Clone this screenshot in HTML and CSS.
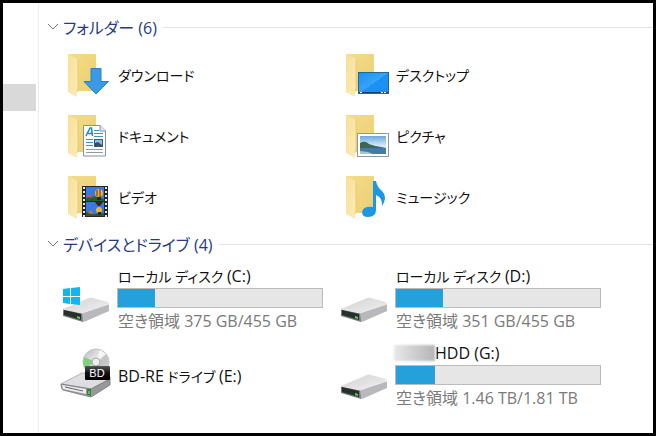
FILE: index.html
```html
<!DOCTYPE html>
<html lang="ja">
  <head>
    <meta charset="UTF-8" />
    <meta name="viewport" content="width=device-width, initial-scale=1.0" />
    <title>PC</title>
    <link rel="stylesheet" href="styles.css">
  </head>
  <body>
    <!-- shared icon shapes -->
    <svg class="defs" width="0" height="0" aria-hidden="true">
      <defs>
        <linearGradient id="back" x1="0" y1="0" x2="1" y2="1">
          <stop offset="0" stop-color="#f3dc8c" />
          <stop offset="1" stop-color="#ebcf70" />
        </linearGradient>
        <linearGradient id="flap" x1="0" y1="0" x2="1" y2="1">
          <stop offset="0" stop-color="#f8df96" />
          <stop offset="1" stop-color="#fdecb8" />
        </linearGradient>
        <linearGradient id="screen" x1="0" y1="0" x2="1" y2="1">
          <stop offset="0" stop-color="#1c8ff0" />
          <stop offset="0.5" stop-color="#38a4fa" />
          <stop offset="0.5" stop-color="#1d93f4" />
          <stop offset="1" stop-color="#1a8ef0" />
        </linearGradient>
        <linearGradient id="sky" x1="0" y1="0" x2="0" y2="1">
          <stop offset="0" stop-color="#6ea6e0" />
          <stop offset="0.55" stop-color="#d8ecf8" />
          <stop offset="1" stop-color="#d8ecf8" />
        </linearGradient>
        <linearGradient id="top" x1="0" y1="0" x2="1" y2="1">
          <stop offset="0" stop-color="#d2d2d4" />
          <stop offset="1" stop-color="#f0f0f1" />
        </linearGradient>
        <linearGradient id="disc" x1="0" y1="0" x2="1" y2="1">
          <stop offset="0" stop-color="#b5b5b5" />
          <stop offset="0.4" stop-color="#e4e4e4" />
          <stop offset="0.6" stop-color="#c2c2c2" />
          <stop offset="1" stop-color="#dcdcdc" />
        </linearGradient>
        <linearGradient id="tag" x1="0" y1="0" x2="0" y2="1">
          <stop offset="0" stop-color="#555" />
          <stop offset="0.5" stop-color="#111" />
          <stop offset="1" stop-color="#000" />
        </linearGradient>
      </defs>
      <symbol id="folder" viewBox="0 0 52 50">
        <path d="M8 4H36V41H14Z" fill="url(#back)" />
        <path d="M8 4L16 8Q18 9 18 12V38Q18 40 17 42V47L8 42Z" fill="url(#flap)" />
        <path d="M18 10V38L17 42" fill="none" stroke="#e0c364" stroke-width="0.7" />
      </symbol>
      <symbol id="drive" viewBox="0 0 52 60">
        <path d="M3 43L29 32Q31 31 33 32L48 36Q49 37 49 38L22 47Z" fill="url(#top)" />
        <path d="M22 47L49 38V45L24 56L22 55Z" fill="#b9b9bd" />
        <path d="M3 43L22 47L23 56L3 50Z" fill="#77797a" />
        <path d="M4 44L21 48V54L4 49Z" fill="#28302c" />
        <path d="M17 50L20 51V53L17 52Z" fill="#52d860" />
        <path d="M3 43L22 47L49 38" fill="none" stroke="#e9e9ea" />
      </symbol>
    </svg>

    <div class="window">
      <aside class="sidebar">
        <div class="selected"></div>
      </aside>

      <main class="content">
        <section>
          <h2 class="group">
            <button type="button" class="toggle" aria-expanded="true">
              <svg class="chevron" viewBox="0 0 12 8" aria-hidden="true"><path d="M1 1L6 6L11 1" /></svg>
              フォルダー (6)
            </button>
          </h2>
          <ul class="items folders">
            <li class="item">
              <svg class="icon" viewBox="0 0 52 50" aria-hidden="true">
                <use href="#folder" />
                <path d="M31 18.500H41V31.500H48.500L36 44L24 31.500H31Z" fill="#3b9ae8" stroke="#2b7fc4" />
              </svg>
              <span class="name">ダウンロード</span>
            </li>
            <li class="item">
              <svg class="icon" viewBox="0 0 52 50" aria-hidden="true">
                <use href="#folder" />
                <rect x="20.500" y="22.500" width="30" height="21" fill="url(#screen)" stroke="#24688f" />
                <path d="M21 42.500H50" stroke="#173e66" />
                <path d="M22 42.500H24M43 42.500H49" stroke="#fff" stroke-dasharray="2 1" />
              </svg>
              <span class="name">デスクトップ</span>
            </li>
            <li class="item">
              <svg class="icon" viewBox="0 0 52 50" aria-hidden="true">
                <use href="#folder" />
                <path d="M23.500 14.500H40L45.500 20V45H23.500Z" fill="#fff" stroke="#8a8f94" />
                <path d="M40 14.500V20H45.500" fill="#e4e7ea" stroke="#8a8f94" />
                <path d="M26 25L30 17H31.500L32.500 25M28 22.500H32" fill="none" stroke="#2186b8" stroke-width="1.500" />
                <path d="M34 19.500H39M34 22.500H43M34 25.500H43M26 28.500H33M26 31.500H33M26 34.500H33" stroke="#3f94bd" />
                <path d="M26 38.500H43M26 41.500H43" stroke="#8d9ba5" />
                <rect x="34.500" y="28.500" width="8" height="7" fill="#8fc0e8" stroke="#315c7c" />
                <path d="M35 35V32L38 31L42 34V35Z" fill="#2d5260" />
              </svg>
              <span class="name">ドキュメント</span>
            </li>
            <li class="item">
              <svg class="icon" viewBox="0 0 52 50" aria-hidden="true">
                <use href="#folder" />
                <rect x="19.500" y="22.500" width="31" height="23" fill="#fff" stroke="#8b98a8" />
                <rect x="22" y="25" width="26" height="18" fill="url(#sky)" />
                <path d="M22 32Q27 29 31 33Q36 35 43 36L48 37V38H22Z" fill="#3c6750" />
                <rect x="22" y="37" width="26" height="6" fill="#3f7da6" />
                <path d="M22 40L30 41L35 43H22Z" fill="#a9c4cc" />
              </svg>
              <span class="name">ピクチャ</span>
            </li>
            <li class="item">
              <svg class="icon" viewBox="0 0 52 50" aria-hidden="true">
                <use href="#folder" />
                <rect x="22" y="14" width="26" height="31" fill="#252525" />
                <path d="M24 15V45M46 15V45" stroke="#e8e8e8" stroke-width="2" stroke-dasharray="2 2" />
                <rect x="26" y="15" width="18" height="14" fill="#3a7ae0" />
                <rect x="26" y="30" width="18" height="14" fill="#3a7ae0" />
                <path d="M26 26L32 24L44 27V29H26ZM26 40L33 42L44 41V44H26Z" fill="#245c34" />
                <circle cx="39" cy="21" r="4" fill="#efb52a" />
                <path d="M37 18V24M40 17V25" stroke="#5b2a16" />
                <path d="M37 25H41V28H37Z" fill="#40200f" />
                <path d="M27 25L30 22L33 26Z" fill="#d44a70" />
                <path d="M35 30H43L40 34H38Z" fill="#3a2418" />
                <circle cx="39" cy="38" r="3" fill="#efb52a" />
                <path d="M38 40H41V43H38Z" fill="#40200f" />
                <path d="M28 41L31 38L33 42Z" fill="#e0702c" />
              </svg>
              <span class="name">ビデオ</span>
            </li>
            <li class="item">
              <svg class="icon" viewBox="0 0 52 50" aria-hidden="true">
                <use href="#folder" />
                <path d="M35 9H38Q39 15 44 19Q50 25 44 34Q45 26 38 23V38Q38 45 30 45Q24 45 24 40Q25 34 35 35Z" fill="#1b97e4" />
              </svg>
              <span class="name">ミュージック</span>
            </li>
          </ul>
        </section>

        <section>
          <h2 class="group">
            <button type="button" class="toggle" aria-expanded="true">
              <svg class="chevron" viewBox="0 0 12 8" aria-hidden="true"><path d="M1 1L6 6L11 1" /></svg>
              デバイスとドライブ (4)
            </button>
          </h2>
          <ul class="items drives">
            <li class="item">
              <svg class="icon" viewBox="0 0 52 60" aria-hidden="true">
                <use href="#drive" />
                <path d="M3 23L10 22V30H3ZM11 22L20 21V30H11ZM3 31H10V38L3 37ZM11 31H20V39L11 38Z" fill="#12b5ee" />
              </svg>
              <div class="info">
                <span class="name">ローカル ディスク <span class="latin">(C:)</span></span>
                <div class="bar"><div class="used" style="width: 18%"></div></div>
                <span class="free">空き領域 375 GB/455 GB</span>
              </div>
            </li>
            <li class="item">
              <svg class="icon" viewBox="0 0 52 60" aria-hidden="true"><use href="#drive" /></svg>
              <div class="info">
                <span class="name">ローカル ディスク <span class="latin">(D:)</span></span>
                <div class="bar"><div class="used" style="width: 23%"></div></div>
                <span class="free">空き領域 351 GB/455 GB</span>
              </div>
            </li>
            <li class="item">
              <svg class="icon" viewBox="0 0 52 60" aria-hidden="true">
                <circle cx="36" cy="19" r="13" fill="url(#disc)" stroke="#c4c4c4" />
                <path d="M36 19L24 14Q22 20 25 25Z" fill="#83cf83" />
                <path d="M36 19L40 7L46 11Z" fill="#f7f7f7" />
                <circle cx="36" cy="19" r="4" fill="#ededed" stroke="#aaa" />
                <path d="M1 41L22 30H46L51 35L31 46Z" fill="#dedee0" stroke="#b4b4b6" />
                <path d="M1 41L31 46L50 36V42L31 54L3 47Q1 46 1 41Z" fill="#98989b" stroke="#858587" />
                <path d="M2 42L26 46V51L3 46Z" fill="#ececee" />
                <path d="M5 44L23 48" stroke="#666" />
                <path d="M27 46H31V53L27 52Z" fill="#32853a" />
                <path d="M29 48V51" stroke="#8cf08c" />
                <rect x="25" y="23" width="25" height="14" rx="1" fill="url(#tag)" />
                <text class="tag" x="37" y="34" text-anchor="middle">BD</text>
              </svg>
              <span class="name"><span class="latin">BD-RE</span> ドライブ <span class="latin">(E:)</span></span>
            </li>
            <li class="item">
              <svg class="icon" viewBox="0 0 52 60" aria-hidden="true"><use href="#drive" /></svg>
              <div class="info">
                <span class="name"><span class="masked"></span><span class="latin">HDD (G:)</span></span>
                <div class="bar"><div class="used" style="width: 19%"></div></div>
                <span class="free">空き領域 1.46 TB/1.81 TB</span>
              </div>
            </li>
          </ul>
        </section>
      </main>
    </div>
  </body>
</html>
```
FILE: styles.css
```css
* {
  box-sizing: border-box;
  margin: 0;
  padding: 0;
}

body {
  font-family: "Open Sans", "Noto Sans CJK JP", sans-serif;
  font-size: 14px;
  font-feature-settings: "palt";
  color: #111;
  background-color: #fff;
}

.defs {
  position: absolute;
}

.window {
  display: flex;
  min-height: 100vh;
  border: 3px solid #000;
}

.sidebar {
  width: 36px;
  padding-top: 81px;
  border-right: 1px solid #ededf0;
}

.selected {
  height: 27px;
  margin-right: 2px;
  background-color: #d9d9d9;
}

.content {
  flex: 1;
  padding-top: 12px;
}

.group {
  display: flex;
  align-items: center;
  gap: 6px;
  height: 24px;
  padding-left: 8px;
}

.group::after {
  content: "";
  flex: 1;
  height: 1px;
  background-color: #e2e3ea;
}

.toggle {
  display: flex;
  align-items: center;
  gap: 4px;
  border: none;
  background: none;
  font: inherit;
  font-size: 16px;
  font-weight: normal;
  font-feature-settings: inherit;
  color: #263a82;
}

.chevron {
  width: 12px;
  height: 8px;
  fill: none;
  stroke: #77777c;
}

.items {
  display: grid;
  grid-template-columns: repeat(auto-fill, 278px);
  padding-left: 21px;
  list-style: none;
}

.folders {
  grid-auto-rows: 61px;
  padding-top: 5px;
  padding-bottom: 5px;
}

.drives {
  grid-auto-rows: 77px;
  padding-top: 4px;
}

.item {
  display: flex;
  align-items: center;
  gap: 5px;
}

.icon {
  flex: none;
  width: 52px;
  height: 50px;
}

.drives .item {
  align-items: flex-start;
}

.drives .icon {
  height: 60px;
  margin-top: 6px;
}

.drives .item > .name {
  align-self: center;
}

.info {
  width: 206px;
  padding-top: 4px;
}

.name,
.free {
  display: flex;
  align-items: center;
  height: 24px;
  padding-left: 1px;
  white-space: pre;
}

.latin,
.free {
  font-size: 16px;
}

.free {
  color: #7a7a7a;
}

.bar {
  height: 20px;
  border: 1px solid #bcbcbc;
  background-color: #e6e6e6;
}

.used {
  height: 100%;
  background-color: #26a0da;
}

/* name hidden by a blurred patch */
.masked {
  width: 41px;
  height: 16px;
  margin-left: -2px;
  background: linear-gradient(to right, #e8e8e8, #b4b4b4);
  filter: blur(1px);
}

.tag {
  font-family: "Liberation Sans", sans-serif;
  font-size: 11px;
  fill: #fff;
}
```
